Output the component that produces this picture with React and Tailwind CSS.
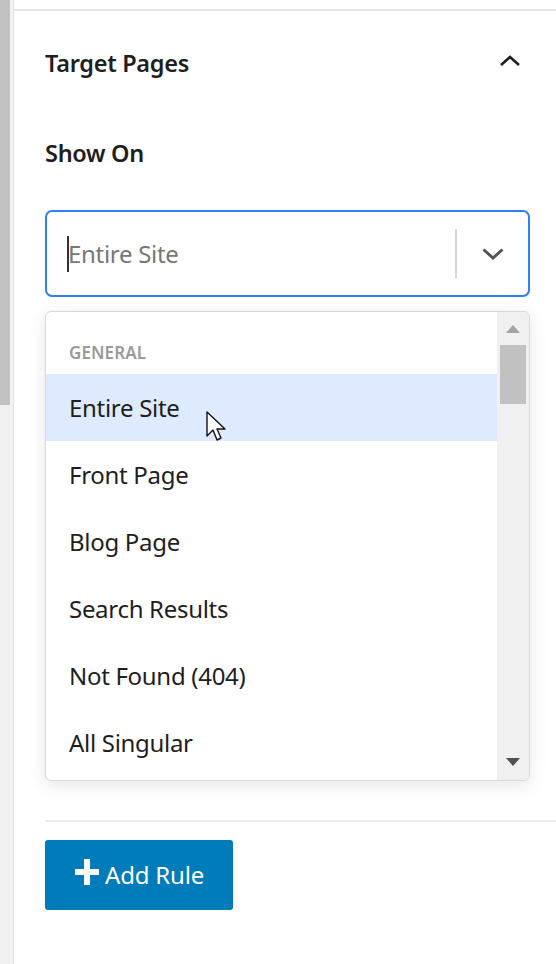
import React from 'react';

const items = ['Entire Site', 'Front Page', 'Blog Page', 'Search Results', 'Not Found (404)', 'All Singular'];

const App = () => {
    return (
        <div className="flex w-[556px] h-[964px] overflow-hidden bg-white" style={{ fontFamily: '"Noto Sans", "Open Sans", sans-serif' }}>
            {/* left scroll strip */}
            <div className="w-[10px] flex flex-col bg-[#f0f0f0]">
                <div className="h-[405px] bg-[#c2c2c2]" />
            </div>
            <div className="w-[3px] bg-[#f2f2f2]" />
            <div className="w-[1px] bg-[#e2e2e2]" />

            <div className="flex-1 flex flex-col">
                <div className="h-[9px] bg-white" />
                <div className="h-[2px] bg-[#e6e6e6]" />

                <div className="pl-[31px] pr-[26px]">
                    <div className="flex items-center justify-between h-[104px] pt-[2px]">
                        <span className="text-[23.5px] font-semibold text-[#1e1e1e] tracking-[-0.3px]">Target Pages</span>
                        <svg width="22" height="14" viewBox="0 0 22 14" className="mr-[9px] mb-[6px]">
                            <path d="M2 11 L11 3 L20 11" fill="none" stroke="#1e1e1e" strokeWidth="2.6" />
                        </svg>
                    </div>

                    <div className="h-[95px] pt-[21px] text-[23.5px] font-semibold text-[#1e1e1e] tracking-[-0.3px]">Show On</div>

                    <div className="relative h-[87px] rounded-[7px] border-2 border-[#2f7ff5] flex items-center">
                        <div className="w-[2px] h-[36px] bg-[#333] ml-[20px]" />
                        <span className="text-[24px] text-[#777] tracking-[-0.3px] -ml-[1px]">Entire Site</span>
                        <div className="ml-auto w-[2px] h-[49px] bg-[#d6d6d6]" />
                        <div className="w-[71px] flex justify-center">
                            <svg width="24" height="14" viewBox="0 0 24 14">
                                <path d="M2.5 2.5 L12 11 L21.5 2.5" fill="none" stroke="#555" strokeWidth="3" />
                            </svg>
                        </div>
                    </div>

                    <div className="relative mt-[14px] h-[470px] rounded-[6px] border border-[#d9d9d9] bg-white shadow-[0_4px_18px_rgba(0,0,0,0.10)] flex overflow-hidden">
                        <div className="flex-1 flex flex-col">
                            <div className="h-[62px] pt-[29px] pl-[23px] text-[17px] font-semibold text-[#9a9a9a] tracking-[0.1px] leading-[24px]">GENERAL</div>
                            {items.map((item, i) => (
                                <div
                                    key={item}
                                    className={`h-[67px] flex items-center pl-[23px] text-[24px] text-[#1e1e1e] tracking-[-0.3px] ${i === 0 ? 'bg-[#deebff]' : ''}`}
                                >
                                    {item}
                                </div>
                            ))}
                        </div>
                        <div className="w-[32px] bg-[#f0f0f0] flex flex-col items-center">
                            <svg width="14" height="8" viewBox="0 0 14 8" className="mt-[13px]">
                                <path d="M0 8 L7 0 L14 8 Z" fill="#a3a3a3" />
                            </svg>
                            <div className="mt-[12px] w-[26px] h-[59px] bg-[#c1c1c1]" />
                            <svg width="14" height="8" viewBox="0 0 14 8" className="mt-auto mb-[14px]">
                                <path d="M0 0 L14 0 L7 8 Z" fill="#505050" />
                            </svg>
                        </div>

                        {/* mouse pointer */}
                        <svg width="26" height="36" viewBox="0 0 26 36" className="absolute left-[160px] top-[99px]">
                            <path d="M1 1 L1 25 L7 19 L11 29 L15 27 L11 18 L19 18 Z" fill="#fff" stroke="#111" strokeWidth="1.4" strokeLinejoin="round" />
                        </svg>
                    </div>
                </div>

                <div className="mt-[39px] ml-[31px] h-[2px] bg-[#ececec]" />

                <div className="pl-[31px] pt-[18px]">
                    <button className="h-[70px] w-[188px] rounded-[3px] bg-[#007cba] flex items-center justify-center gap-[5px] text-white text-[24px] tracking-[-0.2px]">
                        <svg width="26" height="28" viewBox="0 0 26 28" className="mb-[6px]">
                            <path d="M10 1 H16 V11 H25 V17 H16 V27 H10 V17 H1 V11 H10 Z" fill="#fff" />
                        </svg>
                        <span>Add Rule</span>
                    </button>
                </div>
            </div>
        </div>
    );
};

export default App;
